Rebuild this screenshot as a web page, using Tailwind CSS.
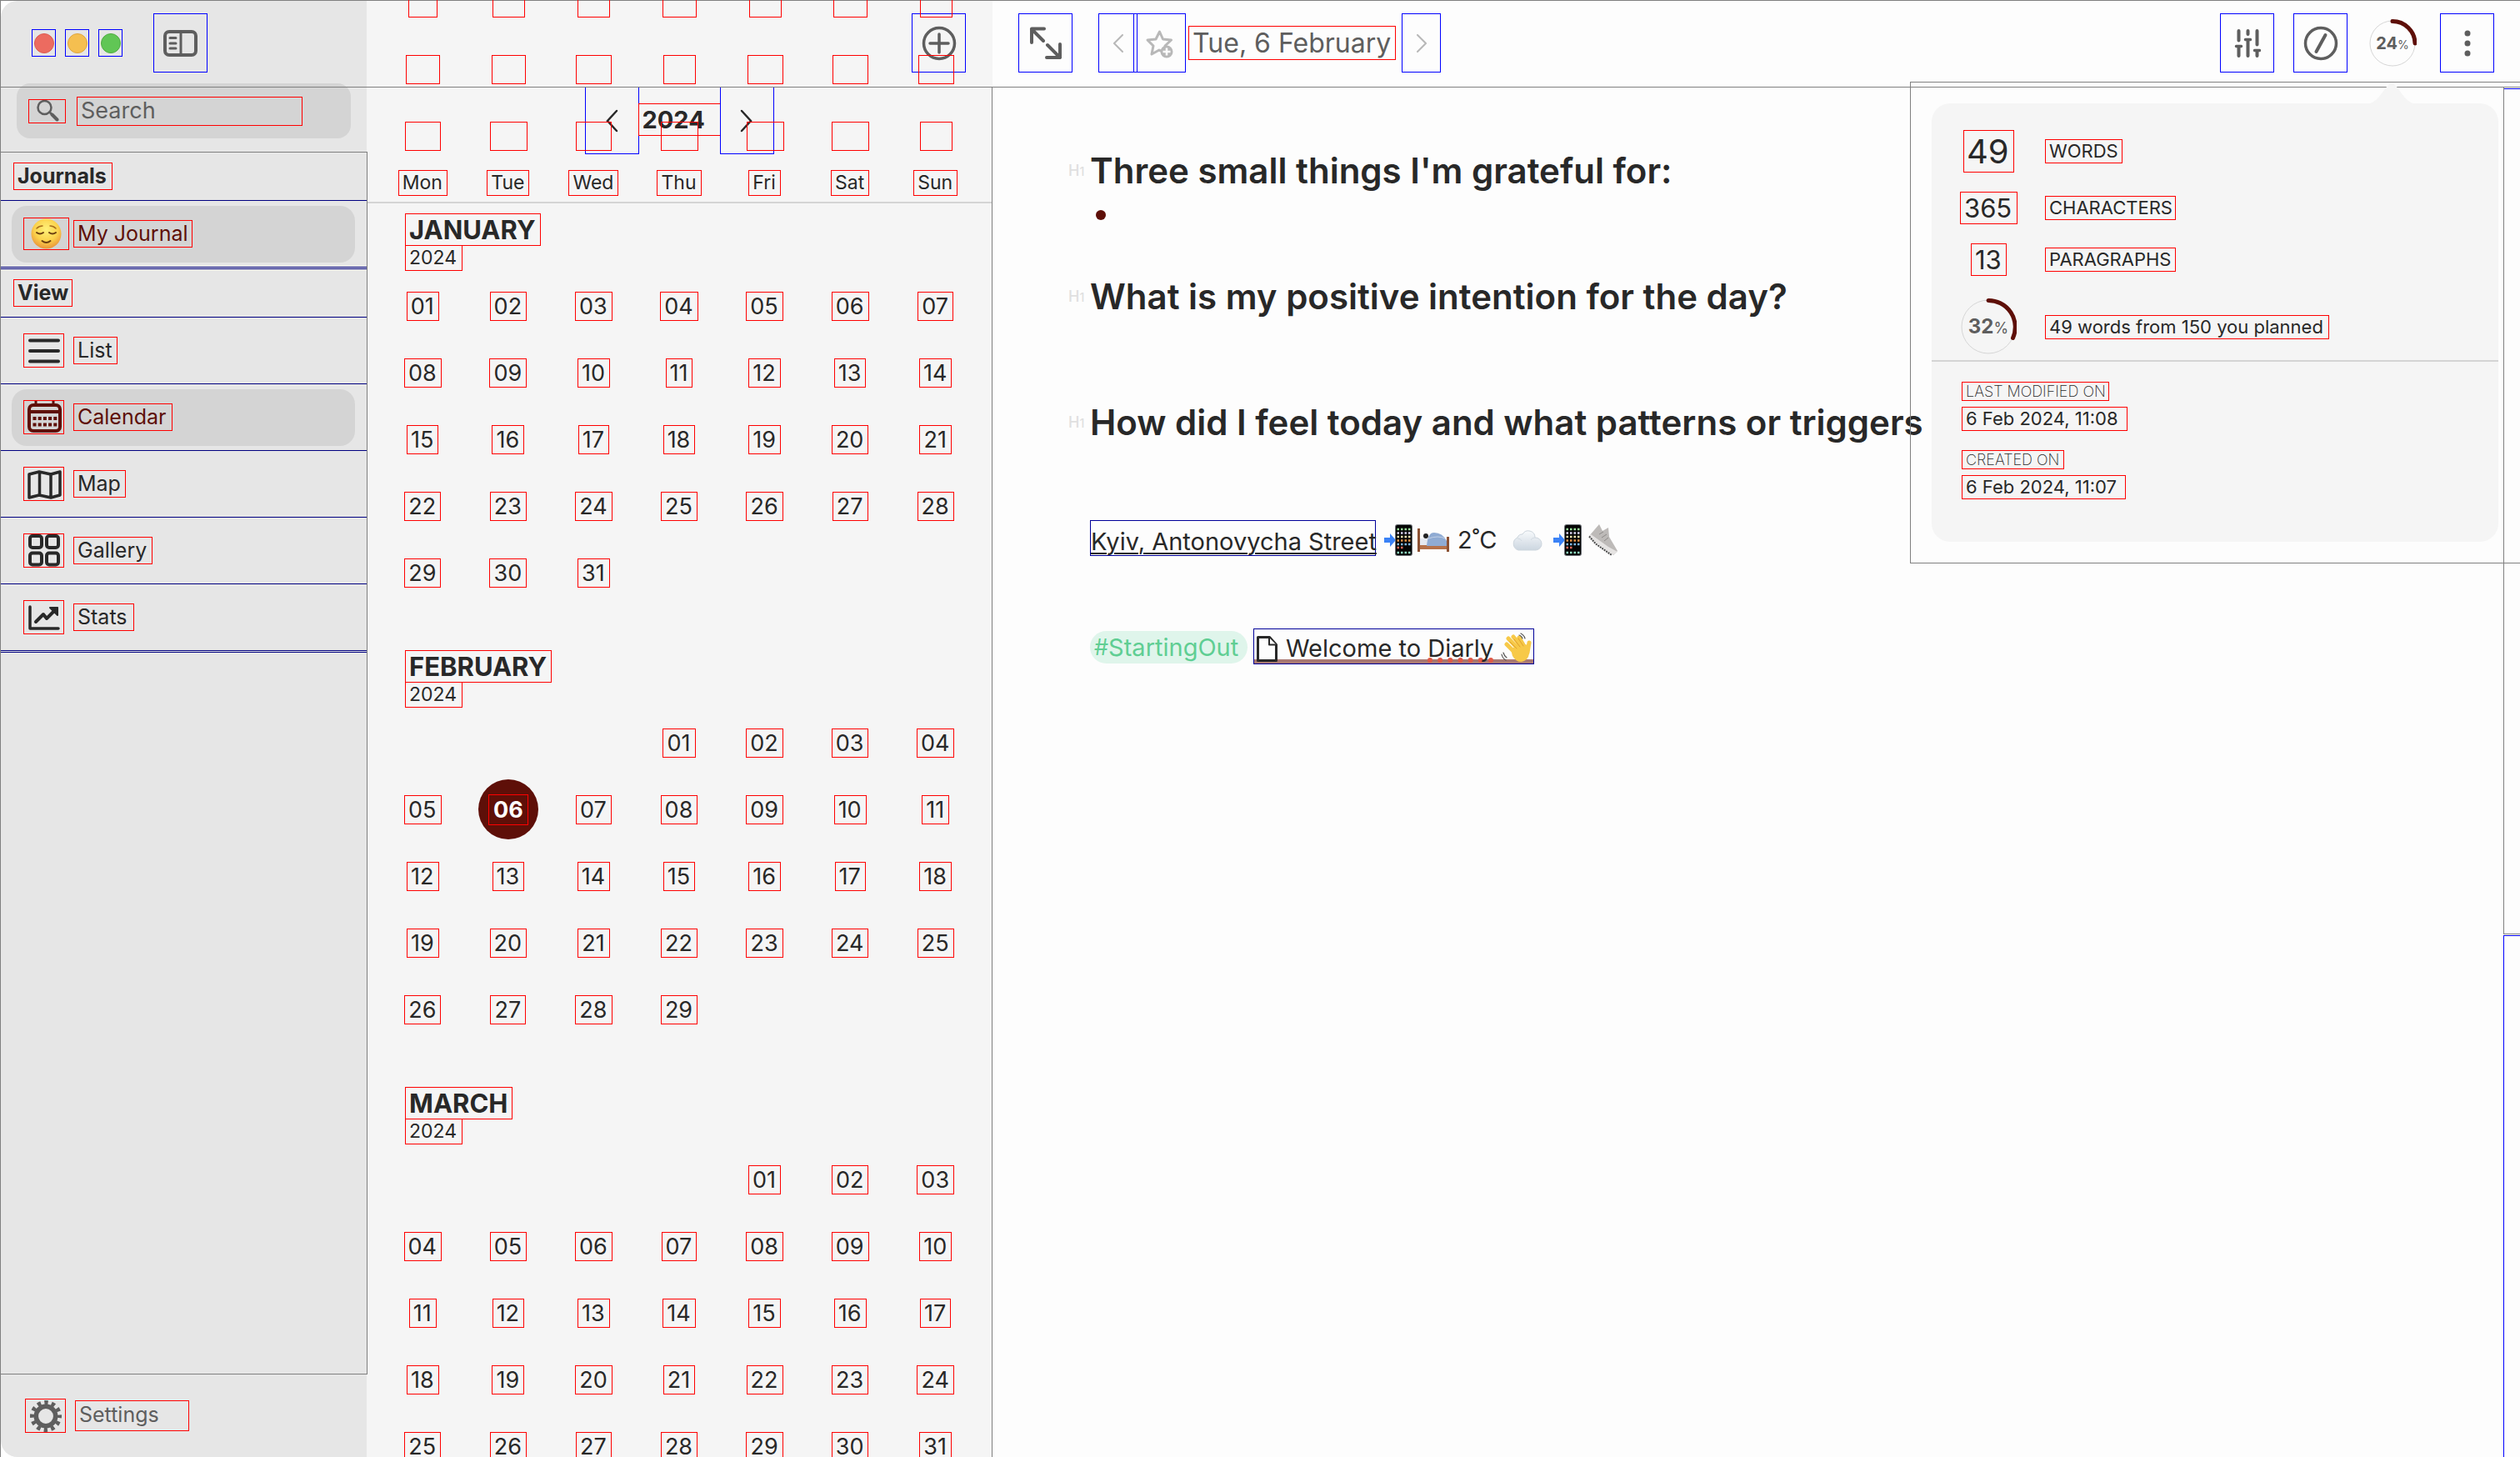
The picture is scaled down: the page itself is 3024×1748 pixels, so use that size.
<!DOCTYPE html>
<html lang="en">
<head>
<meta charset="utf-8">
<title>Diarly</title>
<script src="https://cdn.jsdelivr.net/npm/@tailwindcss/browser@4"></script>
</head>
<body class="h-screen overflow-hidden bg-white font-['Inter','Liberation_Sans',sans-serif] text-[#282828]">
<svg class="hidden" aria-hidden="true">
  <symbol id="phone" viewBox="0 0 34 38">
    <path d="M0 16h7v-5l7 8-7 8v-5H0z" fill="#3b82f6"/>
    <rect x="13" y="0" width="21" height="38" rx="3" fill="#6b6f75"/>
    <rect x="14" y="1" width="19" height="36" rx="2" fill="#050505"/>
    <g stroke-width="2.500" stroke-dasharray="2.500 2">
      <path d="M15.500 6h17" stroke="#9be39b"/><path d="M15.500 10.500h17" stroke="#d9d3ee"/><path d="M15.500 15h17" stroke="#efe3b0"/>
      <path d="M15.500 19.500h17" stroke="#e8954a"/><path d="M15.500 24h17" stroke="#7fb8e8"/><path d="M15.500 28h9" stroke="#e06a5a"/><path d="M15.500 34h17" stroke="#8fdcc0"/>
    </g>
  </symbol>
</svg>

<div class="relative flex h-full border-l border-t border-[#808080]">

  <!-- Sidebar -->
  <aside class="flex w-[439px] shrink-0 flex-col rounded-l-[20px] bg-[#e6e6e6]">
    <div class="relative z-10 flex h-[104px] shrink-0 items-center gap-[11px] border-b border-[#808080] pb-[2px] pl-[37px]">
      <button aria-label="Close" class="flex h-[33px] w-[29px] items-center justify-center border border-[#0000ff]"><span class="size-6 rounded-full border border-[#dd5a50] bg-[#ec6b60]"></span></button>
      <button aria-label="Minimise" class="flex h-[33px] w-[29px] items-center justify-center border border-[#0000ff]"><span class="size-6 rounded-full border border-[#dfa63e] bg-[#f5bf50]"></span></button>
      <button aria-label="Zoom" class="flex h-[33px] w-[29px] items-center justify-center border border-[#0000ff]"><span class="size-6 rounded-full border border-[#51ad41] bg-[#61c655]"></span></button>
      <button aria-label="Toggle sidebar" class="ml-[26px] flex h-[71px] w-[65px] items-center justify-center border border-[#0000ff]">
        <svg class="h-8 w-[42px]" viewBox="0 0 42 32" fill="none" stroke="#5e5e5e" stroke-linecap="round"><rect x="2" y="2" width="37" height="28" rx="5" stroke-width="4"/><path d="M21 2v28" stroke-width="3"/><path d="M8 9.500h7M8 16h7M8 22h7" stroke-width="3"/></svg>
      </button>
    </div>
    <label class="-mt-[5px] ml-[19px] mr-[19px] flex h-[66px] shrink-0 items-center gap-[13px] rounded-2xl bg-[#d4d4d4] pl-[14px]">
      <span class="flex h-[29px] w-[45px] items-center justify-center border border-[#ff0000]">
        <svg class="h-[27px] w-7" viewBox="0 0 28 27" fill="none" stroke="#5e5e5e" stroke-linecap="round"><circle cx="10.500" cy="9" r="8" stroke-width="2.500"/><path d="M16.500 14.500l3 3" stroke-width="2.500"/><path d="M19.500 17.500l6 6" stroke-width="4"/></svg>
      </span>
      <input aria-label="Search" placeholder="Search" class="h-[35px] w-[271px] border border-[#ff0000] bg-transparent pl-1 text-[27px] placeholder:text-[#5e5e5e] placeholder:opacity-100">
    </label>

    <nav class="relative z-10 -mr-px mt-4 flex flex-1 flex-col border-b border-r border-t border-[#808080] text-[25px]">
      <div class="flex h-[58px] items-center border-b border-[#000080] pl-[15px]"><h2 class="h-[33px] w-[119px] border border-[#ff0000] pl-1 font-bold leading-[31px]">Journals</h2></div>
      <a href="#" class="flex h-20 items-center border-b border-[#000080] pl-[13px] pr-[14px] text-[#5e0f08]">
        <span class="flex h-[68px] w-full items-center gap-[5px] rounded-[18px] bg-[#d4d4d4] pl-[14px]">
          <span class="flex h-[39px] w-[55px] items-center justify-center border border-[#ff0000]">
            <svg class="size-[37px]" viewBox="0 0 37 37" fill="none" stroke-linecap="round"><defs><radialGradient id="face" cx=".5" cy=".35" r=".65"><stop offset="0" stop-color="#fff17a"/><stop offset=".6" stop-color="#fbd24c"/><stop offset="1" stop-color="#e9953a"/></radialGradient></defs><circle cx="18.500" cy="18.500" r="18" fill="url(#face)"/><path d="M7 17q4 3 8 0M22 17q4 3 8 0M13.500 27q5 4 10 0" stroke="#6b3f10" stroke-width="2"/><path d="M7 12q3-3 7-3M30 12q-3-3-7-3" stroke="#a86d1c" stroke-width="1.500"/></svg>
          </span>
          <span class="h-[33px] w-[143px] border border-[#ff0000] pl-1 leading-[31px]">My Journal</span>
        </span>
      </a>
      <div class="mt-px flex h-[59px] items-center border-b border-t border-[#000080] pl-[15px]"><h2 class="h-[33px] w-[71px] border border-[#ff0000] pl-1 font-bold leading-[31px]">View</h2></div>
      <a href="#" class="flex h-20 items-center gap-[11px] border-b border-[#000080] pl-[27px]">
        <span class="flex h-[41px] w-[49px] items-center justify-center border border-[#ff0000]"><svg class="h-[34px] w-10" viewBox="0 0 40 34" fill="none" stroke="#282828" stroke-width="4" stroke-linecap="round"><path d="M3 4.500h34M3 17h34M3 29.500h34"/></svg></span>
        <span class="h-[33px] w-[53px] border border-[#ff0000] pl-1 leading-[31px]">List</span>
      </a>
      <a href="#" class="flex h-20 items-center border-b border-[#000080] pl-[13px] pr-[14px] text-[#5e0f08]">
        <span class="flex h-[68px] w-full items-center gap-[11px] rounded-[18px] bg-[#d4d4d4] pl-[14px]">
          <span class="flex h-[41px] w-[49px] items-center justify-center border border-[#ff0000]"><svg class="h-[39px] w-[42px]" viewBox="0 0 42 39" fill="none" stroke="#5e0f08" stroke-width="4"><rect x="3" y="5" width="37" height="31" rx="5"/><path d="M3 13h37"/><path d="M11 0v5M32 0v5" stroke-width="3"/><path d="M7.500 21h29M7.500 28.500h29" stroke-dasharray="4 2.200"/></svg></span>
          <span class="h-[33px] w-[119px] border border-[#ff0000] pl-1 leading-[31px]">Calendar</span>
        </span>
      </a>
      <a href="#" class="flex h-20 items-center gap-[11px] border-b border-[#000080] pl-[27px]">
        <span class="flex h-[41px] w-[49px] items-center justify-center border border-[#ff0000]"><svg class="h-9 w-[42px]" viewBox="0 0 42 36" fill="none" stroke="#282828" stroke-width="3.500" stroke-linejoin="round"><path d="M3 6l12-3 14 3 11-3v28l-11 3-14-3-12 3zM15.500 3v28M29 6v28"/></svg></span>
        <span class="h-[33px] w-[63px] border border-[#ff0000] pl-1 leading-[31px]">Map</span>
      </a>
      <a href="#" class="flex h-20 items-center gap-[11px] border-b border-[#000080] pl-[27px]">
        <span class="flex h-[41px] w-[49px] items-center justify-center border border-[#ff0000]"><svg class="h-[39px] w-10" viewBox="0 0 40 39" fill="none" stroke="#282828" stroke-width="4"><rect x="3" y="2" width="14" height="14" rx="3"/><rect x="23" y="2" width="14" height="14" rx="3"/><rect x="3" y="22.500" width="14" height="14" rx="3"/><rect x="23" y="22.500" width="14" height="14" rx="3"/></svg></span>
        <span class="h-[33px] w-[95px] border border-[#ff0000] pl-1 leading-[31px]">Gallery</span>
      </a>
      <a href="#" class="flex h-20 items-center gap-[11px] border-b border-[#000080] pl-[27px]">
        <span class="flex h-[41px] w-[49px] items-center justify-center border border-[#ff0000]"><svg class="h-8 w-10" viewBox="0 0 40 32" fill="none" stroke="#282828" stroke-linecap="round" stroke-linejoin="round"><path d="M3 3v26h34" stroke-width="3.500"/><path d="M10 21l9-9 4 5 12-12" stroke-width="4"/><path d="M27 4h9v9z" fill="#282828" stroke-width="2"/></svg></span>
        <span class="h-[33px] w-[73px] border border-[#ff0000] pl-1 leading-[31px]">Stats</span>
      </a>
      <div class="mt-px border-b border-[#000080]"></div>
    </nav>
    <a href="#" class="flex h-[99px] shrink-0 items-center gap-[11px] pl-[29px] text-[25px] text-[#5e5e5e]">
      <span class="flex h-[41px] w-[49px] items-center justify-center border border-[#ff0000]"><svg class="size-[38px]" viewBox="-19 -19 38 38" fill="none" stroke="#5e5e5e"><circle r="11.700" stroke-width="5.500"/><circle r="16.500" stroke-width="5" stroke-dasharray="4.400 4.239" stroke-dashoffset="2.200"/></svg></span>
      <span class="h-[37px] w-[137px] border border-[#ff0000] pl-1 leading-[33px]">Settings</span>
    </a>
  </aside>

  <!-- Calendar column -->
  <section class="relative flex w-[751px] shrink-0 flex-col bg-[#f5f5f5]">
    <div class="flex h-[104px] shrink-0 items-center justify-end border-b border-[#808080] pb-[2px] pr-8">
      <button aria-label="New entry" class="flex h-[71px] w-[65px] items-center justify-center border border-[#0000ff]">
        <svg class="size-[42px]" viewBox="0 0 42 42" fill="none" stroke="#5e5e5e" stroke-width="3.500" stroke-linecap="round"><circle cx="21" cy="21" r="18.500"/><path d="M21 10v22M10 21h22"/></svg>
      </button>
    </div>
    <div id="previous" class="pointer-events-none absolute inset-x-0 -top-[38px] grid grid-cols-7 px-4"></div>
    <div class="flex min-h-0 flex-1 flex-col border-r border-[#808080]">
      <div class="flex h-20 shrink-0 items-center justify-center">
        <button aria-label="Previous year" class="flex h-20 w-[65px] items-center justify-center border-x border-b border-[#0000ff]"><svg class="h-7 w-4" viewBox="0 0 16 28" fill="none" stroke="#282828" stroke-width="2.500" stroke-linecap="round"><path d="M14 2L3 14l11 12"/></svg></button>
        <h2 class="-mx-px mb-[3px] h-[39px] w-[99px] border border-[#ff0000] pl-1 text-[29px] font-bold leading-[37px]">2024</h2>
        <button aria-label="Next year" class="flex h-20 w-[65px] items-center justify-center border-x border-b border-[#0000ff]"><svg class="h-7 w-4" viewBox="0 0 16 28" fill="none" stroke="#282828" stroke-width="2.500" stroke-linecap="round"><path d="M2 2l11 12L2 26"/></svg></button>
      </div>
      <div id="weekdays" class="grid shrink-0 grid-cols-7 justify-items-center border-b-2 border-[#d4d4d4] px-4 pb-[7px] pt-[19px] text-[23px]"></div>
      <div id="months" class="min-h-0 flex-1 overflow-hidden px-4 pt-3"></div>
    </div>
  </section>

  <!-- Editor -->
  <main class="flex min-w-0 flex-1 flex-col bg-[#fdfdfd]">
    <div class="flex h-[104px] shrink-0 items-center border-b border-[#808080] pb-[2px] pl-[31px] pr-[31px] text-[#5e5e5e]">
      <button aria-label="Full screen" class="flex h-[71px] w-[65px] items-center justify-center border border-[#0000ff]"><svg class="size-10" viewBox="0 0 40 40" fill="none" stroke="#5e5e5e" stroke-width="4" stroke-linecap="round" stroke-linejoin="round"><path d="M18 2.500H3V19M3 3l14 14M22 22l15 15M37 21v16H21"/></svg></button>
      <button aria-label="Previous day" class="ml-[31px] flex h-[71px] w-[47px] items-center justify-center border border-[#0000ff]"><svg class="h-[22px] w-3" viewBox="0 0 12 22" fill="none" stroke="#b8b8b8" stroke-width="2" stroke-linecap="round"><path d="M11 1L1 11l10 10"/></svg></button>
      <button aria-label="Add to favourites" class="-ml-[5px] flex h-[71px] w-[63px] items-center justify-center border border-[#0000ff]"><svg class="size-9" viewBox="0 0 36 36" fill="none" stroke="#b8b8b8" stroke-width="3" stroke-linejoin="round"><path d="M17.500 4l4 9 10 1-7.500 7 2 10-9-5-9 5 2-10-7-7 10-1z"/><circle cx="26" cy="28" r="7.500" fill="#b8b8b8" stroke="none"/><path d="M26 23.500v9M21.500 28h9" stroke="#fdfdfd" stroke-width="2.500"/></svg></button>
      <h1 class="ml-[3px] h-[41px] w-[249px] whitespace-nowrap border border-[#ff0000] pl-1 text-[32px] leading-[39px]">Tue, 6 February</h1>
      <button aria-label="Next day" class="ml-[7px] flex h-[71px] w-[47px] items-center justify-center border border-[#0000ff]"><svg class="h-[22px] w-3" viewBox="0 0 12 22" fill="none" stroke="#b8b8b8" stroke-width="2" stroke-linecap="round"><path d="M1 1l10 10L1 21"/></svg></button>
      <button aria-label="Options" class="ml-auto flex h-[71px] w-[65px] items-center justify-center border border-[#0000ff]"><svg class="h-9 w-8" viewBox="0 0 32 36" fill="none" stroke="#5e5e5e" stroke-width="4" stroke-linecap="round"><path d="M5.500 3v11.500M5.500 22v11M16.500 3v4M16.500 14v19M27.500 3v16.500M27.500 27v6"/><path d="M2.500 21.500h6M13.500 13.500h6M24.500 26.500h6" stroke-width="3.500"/></svg></button>
      <button aria-label="Templates" class="ml-[23px] flex h-[71px] w-[65px] items-center justify-center border border-[#0000ff]"><svg class="size-[42px]" viewBox="0 0 42 42" fill="none" stroke="#5e5e5e" stroke-linecap="round"><circle cx="21" cy="21" r="18.500" stroke-width="3.500"/><path d="M15.500 31l11-20" stroke-width="4"/></svg></button>
      <button aria-label="Goal" class="relative ml-[25px] flex size-[58px] items-center justify-center">
        <svg class="absolute inset-0 size-[58px]" viewBox="-29 -29 58 58" fill="none"><circle r="27" stroke="#d6d6d6"/><path d="M0-26.500A27 27 0 0 1 27 0" stroke="#5e0f08" stroke-width="5" stroke-linecap="round"/></svg>
        <span class="text-[20px] font-bold leading-6">24<span class="text-sm font-normal">%</span></span>
      </button>
      <button aria-label="More" class="ml-7 flex h-[71px] w-[65px] items-center justify-center border border-[#0000ff]"><svg class="h-8 w-2" viewBox="0 0 8 32" fill="#5e5e5e"><circle cx="4" cy="4" r="3.500"/><circle cx="4" cy="16" r="3.500"/><circle cx="4" cy="28" r="3.500"/></svg></button>
    </div>

    <div class="flex min-h-0 flex-1">
      <article class="min-w-0 flex-1 pl-[91px] pt-[72px] text-[29px]">
        <h2 class="flex h-14 items-center whitespace-nowrap text-[42px] font-semibold leading-[56px]"><span class="w-[26px] text-lg font-medium text-[#e0e0e0]">H<span class="text-sm">1</span></span>Three small things I'm grateful for:</h2>
        <ul class="flex h-[50px] items-center pl-[33px]"><li class="size-3 list-none rounded-full bg-[#5e0f08]"></li></ul>
        <h2 class="mt-[45px] flex h-14 items-center whitespace-nowrap text-[42px] font-semibold leading-[56px]"><span class="w-[26px] text-lg font-medium text-[#e0e0e0]">H<span class="text-sm">1</span></span>What is my positive intention for the day?</h2>
        <h2 class="mt-[95px] flex h-14 items-center whitespace-nowrap text-[42px] font-semibold leading-[56px]"><span class="w-[26px] text-lg font-medium text-[#e0e0e0]">H<span class="text-sm">1</span></span>How did I feel today and what patterns or triggers</h2>
        <div class="mt-[89px] flex h-[47px] items-center whitespace-nowrap pl-[26px]">
          <a href="#" class="h-[43px] w-[343px] self-start border border-[#000099] leading-[49px] underline decoration-2 underline-offset-[3px]">Kyiv, Antonovycha Street</a>
          <svg class="ml-[10px] h-[38px] w-[34px]"><use href="#phone"/></svg>
          <svg class="ml-[6px] h-7 w-[38px]" viewBox="0 0 38 28"><path d="M2 20h34v5H2z" fill="#b5714a"/><path d="M0 0h3v28H0zM35 10h3v18h-3z" fill="#8c5133"/><path d="M3 12h10v8H3z" fill="#e5e9f0"/><path d="M11 21C12 11 14 5 20 5q10 0 15 10v6z" fill="#8fabd3"/><path d="M13 12q12-4 20 0" fill="none" stroke="#c3d1e6"/><circle cx="10" cy="9" r="3" fill="#222"/></svg>
          <span class="ml-[10px] w-[54px]">2˚C</span>
          <svg class="ml-[10px] h-7 w-[38px]" viewBox="0 0 38 28"><defs><linearGradient id="cloud" x2="0" y2="1"><stop stop-color="#f8fafc"/><stop offset="1" stop-color="#ccd6e0"/></linearGradient></defs><path d="M9 26a8 8 0 0 1-1-15 6 6 0 0 1 6-4 8 8 0 0 1 15 4 7.500 7.500 0 0 1 1 15z" fill="url(#cloud)" stroke="#ccd5dd"/><path d="M8 12q4 0 5 3M29 11q-4 0-5 3" fill="none" stroke="#d3dbe3"/></svg>
          <svg class="ml-[13px] h-[38px] w-[34px]"><use href="#phone"/></svg>
          <svg class="ml-2 h-[38px] w-9" viewBox="0 0 36 38"><path d="M1 14L13 0l4 8 7-4 1 11 10 17-5 5z" fill="#bdbab8"/><path d="M1 14l8 8 21 15 5-4-11-6L3 12z" fill="#e5e3e2"/><path d="M1 14.500l8 9L28 37" fill="none" stroke="#4b4b4b" stroke-width="2" stroke-dasharray="2 1"/><path d="M13 12l5-3M16 16l6-4M19 20l5-4" stroke="#8d8a88"/></svg>
        </div>
        <div class="mt-[83px] flex h-[43px] items-center whitespace-nowrap pl-[26px]">
          <a href="#" class="mt-[2px] flex h-[39px] w-[189px] items-center rounded-full bg-[#dff5eb] pl-[5px] leading-[39px] text-[#5fce93]"><span class="text-[27px]">#</span>StartingOut</a>
          <a href="#" class="relative ml-[7px] flex h-[43px] w-[337px] items-center border border-[#000099] pl-[3px]">
            <span class="absolute inset-x-0 bottom-0 h-[5px] bg-[#a87872]"></span>
            <svg class="relative mt-[6px] h-[31px] w-[25px]" viewBox="0 0 25 31" fill="#fdfdfd" stroke="#282828" stroke-width="3" stroke-linejoin="round"><path d="M1.500 1.500h14l8 9v19h-22z"/><path d="M15 2v8.500h8.500" stroke-width="2"/></svg>
            <span class="relative ml-[10px] mt-[3px] leading-[43px]">Welcome to <span class="underline decoration-[#e05a48] decoration-dotted decoration-[6px] underline-offset-[2px] [text-decoration-skip-ink:none]">Diarly</span></span>
            <svg class="absolute right-[2px] top-1 size-[37px]" viewBox="0 0 37 37" fill="none" stroke-linecap="round"><g stroke="#f7c948" stroke-width="5"><path d="M7 14l12 12M9 7l14 15M15 5l12 15M22 6l8 14M34 12l-2 12"/></g><path d="M12 20l12-7 9 2 1 10q-1 8-9 10-6 1-11-7z" fill="#f7c948"/><path d="M11 11l8 8M16 8l7 9M21 7l6 9" stroke="#e0a12e"/><path d="M24 1q4 2 5 6M22 3q3 1 4 4M1 26q1 5 5 7M3 24q1 4 4 6" stroke="#555" stroke-width="1.200"/></svg>
          </a>
        </div>
      </article>
      <div class="flex w-5 shrink-0 flex-col">
        <div class="flex-[1016] border-b border-l border-[#808080] pt-px"><div class="border-t border-[#0000ff]"></div></div>
        <div class="mt-px flex-[626] border-l border-t border-[#0000ff]"></div>
      </div>
    </div>
  </main>

  <!-- Entry statistics popover -->
  <div class="absolute right-0 top-[97px] w-[732px] border-y border-l border-[#808080] pb-[25px] pl-[25px] pr-[26px] pt-[25px] text-[22px]">
    <svg class="absolute right-[124px] top-px h-[25px] w-[60px]" viewBox="0 0 60 25"><path d="M0 25C12 24 18 11 25 3q5-6 10 0C42 11 48 24 60 25z" fill="#f5f5f5"/></svg>
    <div class="rounded-[22px] bg-[#f5f5f5] pb-[51px]">
      <dl class="grid grid-cols-[69px_1fr] items-center gap-x-[33px] border-b-2 border-[#d4d4d4] pb-[6px] pl-[34px] pt-8">
        <dd class="h-[51px] w-[61px] justify-self-center border border-[#ff0000] pl-[3px] text-[40px] leading-[49px]">49</dd>
        <dt class="h-[29px] w-[93px] border border-[#ff0000] pl-1 leading-[27px]">WORDS</dt>
        <dd class="mt-[23px] h-[39px] w-[69px] border border-[#ff0000] pl-1 text-[31px] leading-[37px]">365</dd>
        <dt class="mt-[22px] h-[29px] w-[157px] border border-[#ff0000] pl-1 leading-[27px]">CHARACTERS</dt>
        <dd class="mt-[23px] h-[39px] w-[43px] justify-self-center border border-[#ff0000] pl-1 text-[31px] leading-[37px]">13</dd>
        <dt class="mt-[22px] h-[29px] w-[157px] border border-[#ff0000] pl-1 leading-[27px]">PARAGRAPHS</dt>
        <dd class="relative mt-[27px] flex size-[68px] items-center justify-center font-bold text-[#5e5e5e]">
          <svg class="absolute inset-0 size-[68px]" viewBox="-34 -34 68 68" fill="none"><circle r="32" stroke="#d6d6d6"/><path d="M0-31.500A32 32 0 0 1 29.500 13.500" stroke="#5e0f08" stroke-width="5" stroke-linecap="round"/></svg>
          <span class="relative text-2xl">32<span class="text-lg font-normal">%</span></span>
        </dd>
        <dt class="mt-[27px] h-[29px] w-[341px] whitespace-nowrap border border-[#ff0000] pl-1 leading-[27px]">49 words from 150 you planned</dt>
      </dl>
      <dl class="flex flex-col pl-9 pt-6">
        <dt class="h-[23px] w-[177px] whitespace-nowrap border border-[#ff0000] pl-1 text-lg font-extralight leading-[21px]">LAST MODIFIED ON</dt>
        <dd class="mt-[7px] h-[29px] w-[199px] whitespace-nowrap border border-[#ff0000] pl-1 leading-[27px]">6 Feb 2024, 11:08</dd>
        <dt class="mt-[23px] h-[23px] w-[123px] whitespace-nowrap border border-[#ff0000] pl-1 text-lg font-extralight leading-[21px]">CREATED ON</dt>
        <dd class="mt-[7px] h-[29px] w-[197px] whitespace-nowrap border border-[#ff0000] pl-1 leading-[27px]">6 Feb 2024, 11:07</dd>
      </dl>
    </div>
  </div>
</div>

<script>
  const cell = inner => `<div class="flex h-20 items-center justify-center">${inner}</div>`;

  // Outlines of the month that has scrolled under the toolbar
  const widths = [35, 39, 39, 41, 39, 41, 39, 41, 41, 43, 39, 43, 43, 43, 43, 45, 43, 45, 45, 45, 39];
  document.getElementById('previous').innerHTML = widths.map(w =>
    cell(`<span class="h-[35px] border border-[#ff0000]" style="width:${w}px"></span>`)).join('');

  document.getElementById('weekdays').innerHTML = ['Mon', 'Tue', 'Wed', 'Thu', 'Fri', 'Sat', 'Sun'].map(d =>
    `<span class="h-[31px] border border-[#ff0000] pl-1 pr-[5px] leading-[29px]">${d}</span>`).join('');

  const months = [['JANUARY', 0, 31], ['FEBRUARY', 3, 29], ['MARCH', 4, 31]];
  document.getElementById('months').innerHTML = months.map(([name, offset, days], i) => {
    let cells = '';
    for (let k = 0; k < offset; k++) cells += cell('');
    for (let d = 1; d <= days; d++) {
      const n = String(d).padStart(2, '0');
      cells += cell(i === 1 && d === 6
        ? `<button class="flex size-[72px] items-center justify-center rounded-full bg-[#5e0f08] font-bold text-white"><span class="h-[37px] border border-[#ff0000] px-[5px] leading-[35px]">${n}</span></button>`
        : `<button class="h-[35px] border border-[#ff0000] pl-1 pr-[5px] leading-[33px]">${n}</button>`);
    }
    return `<section class="${i ? 'pt-[52px]' : ''}">
      <div class="flex h-[71px] flex-col items-start pl-[30px]">
        <h3 class="h-[39px] border border-[#ff0000] pl-1 pr-[5px] text-[31px] font-bold leading-[37px]">${name}</h3>
        <p class="-mt-px h-[31px] w-[69px] border border-[#ff0000] pl-1 text-[23px] leading-[29px]">2024</p>
      </div>
      <div class="mb-px grid grid-cols-7 text-[27px]">${cells}</div>
    </section>`;
  }).join('');
</script>
</body>
</html>
